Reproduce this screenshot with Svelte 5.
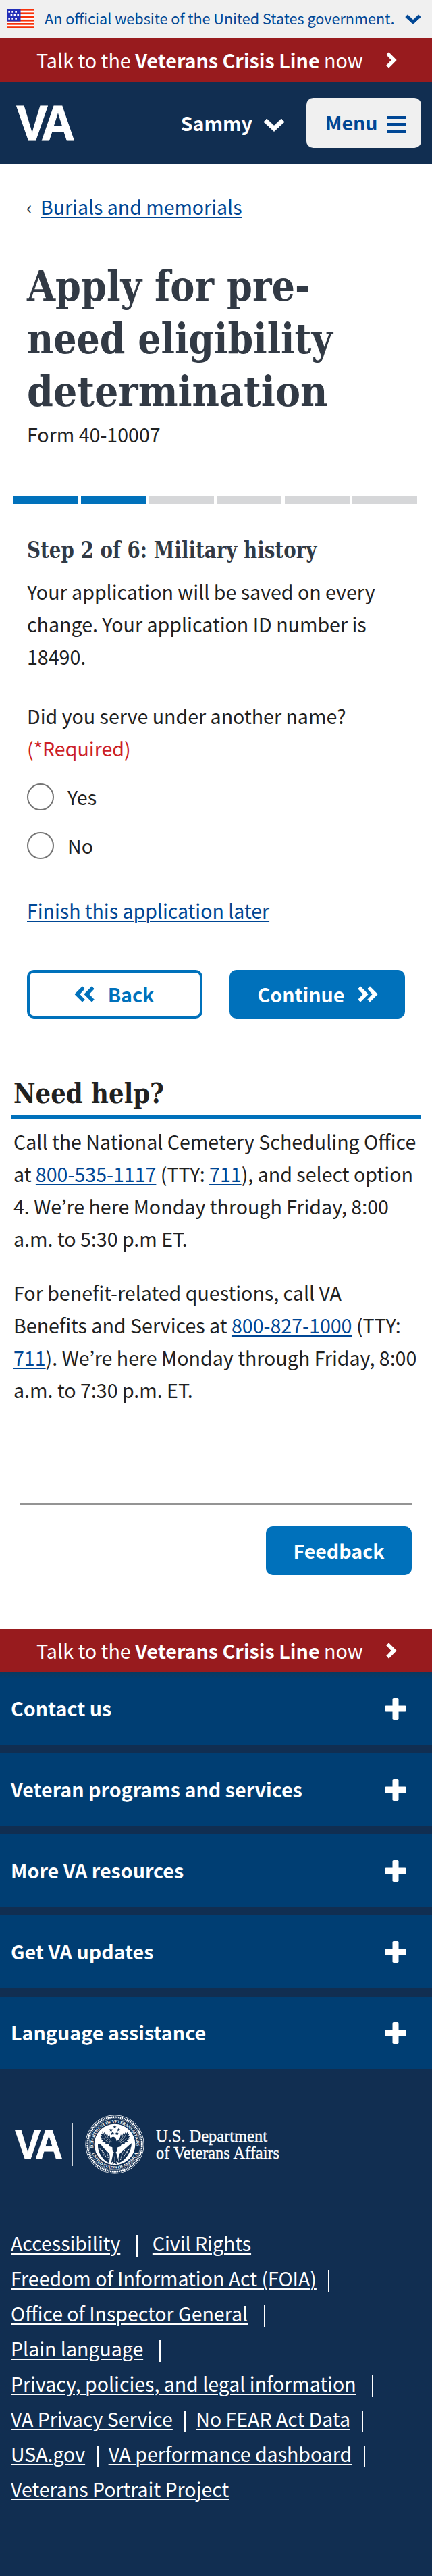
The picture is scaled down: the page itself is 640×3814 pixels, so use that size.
<script>
  let serve = $state('');
  const steps = [true, true, false, false, false, false];
  const title = [['Apply for pre-', 0.875], ['need eligibility', 0.869], ['determination', 0.897]];
  const sections = ['Contact us', 'Veteran programs and services', 'More VA resources', 'Get VA updates', 'Language assistance'];
  const rows = [
    [{ t: 'Accessibility', wide: true, sep: true }, { t: 'Civil Rights' }],
    [{ t: 'Freedom of Information Act (FOIA)', sep: true }],
    [{ t: 'Office of Inspector General', wide: true, sep: true }],
    [{ t: 'Plain language', wide: true, sep: true }],
    [{ t: 'Privacy, policies, and legal information', wide: true, sep: true }],
    [{ t: 'VA Privacy Service', sep: true }, { t: 'No FEAR Act Data', sep: true }],
    [{ t: 'USA.gov', sep: true }, { t: 'VA performance dashboard', sep: true }],
    [{ t: 'Veterans Portrait Project' }]
  ];
  const stars = [[12.3, 16], [17.3, 16], [22.3, 16], [15.6, 21], [20.6, 21], [25.4, 21], [12.3, 26], [17.3, 26], [22.3, 26]];
  const sealStars = [[133, 98], [150, 85], [167, 98], [140, 114], [160, 114]];
  const wing = 'M93 104 97 119 87 114 95 128 84 125 95 138 87 137 100 147 93 149 110 156 108 160 122 161 128 173 152 178 152 152Q138 148 131 137L126 118 121 128 115 112 112 122 104 106 102 116z';
</script>

{#snippet down(w, h)}
  <svg class="ico" width={w} height={h} viewBox="0 0 32 20" preserveAspectRatio="none"><path d="M1 5.6 5.2 1 16 11.4 26.8 1 31 5.6 16 19.4z" /></svg>
{/snippet}
{#snippet right()}
  <svg class="ico" width="16" height="24" viewBox="0 0 16 24"><path d="M4 .8 15.2 12 4 23.2.8 19.8 8.2 12 .8 4.2z" /></svg>
{/snippet}
{#snippet crisis()}
  <div class="crisis">
    <span>Talk to the <b>Veterans Crisis Line</b> now</span>
    {@render right()}
  </div>
{/snippet}
{#snippet va(w, h)}
  <svg class="va" width={w} height={h} viewBox="0 0 85 52.5"><text transform="translate(0 52.2) scale(.93 1)" x="0.4 39.6" y="0">VA</text></svg>
{/snippet}
{#snippet seal()}
  <svg class="seal" width="88" height="88" viewBox="18 31 264 264">
    <g fill="none" stroke="#fff">
      <circle cx="150" cy="163" r="129.5" stroke-width="2.5" />
      <circle cx="150" cy="163" r="121" stroke-width="8" stroke-dasharray="5.5 2.4" />
      <circle cx="150" cy="163" r="114" stroke-width="1.5" />
    </g>
    <path id="arcTop" d="M55 178A96 96 0 1 1 245 178" fill="none" />
    <path id="arcBottom" d="M42 178A109 109 0 0 0 258 178" fill="none" />
    <text class="ring"><textPath href="#arcTop" textLength="322" startOffset="0">DEPARTMENT OF VETERANS AFFAIRS</textPath></text>
    <text class="ring"><textPath href="#arcBottom" textLength="262" startOffset="26">UNITED STATES OF AMERICA</textPath></text>
    <circle cx="150" cy="163" r="91" fill="#fff" />
    <g fill="#112e51">
      {#each sealStars as [x, y]}
        <path transform="translate({x} {y})" d="M0-8 2.2-2.5 8-2.3 3.5 1.3 5 7 0 3.7-5 7-3.5 1.3-8-2.3-2.2-2.5z" />
      {/each}
      <path d={wing} />
      <path d={wing} transform="translate(303 0) scale(-1 1)" />
      <path d="M75 160q14 0 20 13l31 31q5 20-3 40-18-5-33-29-17-24-15-55zM225 158q-12 8-24 20l-30 27q-9 20 0 39 19-7 35-30 18-26 19-56z" />
      <path d="M143 201l-9 44 10-8-5 15 10-6 11 6-3-14 12 7-12-44z" />
    </g>
    <g stroke="#fff" fill="none" stroke-width="3">
      <path d="M104 181q15 10 17 49M92 188q14 14 20 35M83 182q14 10 18 30M195 190q-15 15-19 42M211 184q-12 18-22 37M219 176q-9 11-15 27" stroke-dasharray="7 3" />
      <path d="M103 117q8 22 30 36M114 122q6 16 22 28M98 133q10 14 30 24M200 117q-8 22-30 36M189 122q-6 16-22 28M205 133q-10 14-30 24M150 216v25" stroke-width="1.8" />
      <path d="M74 145l64 55M228 140l-65 58" stroke-width="7" />
    </g>
    <path d="M130 140q4-12 15-11 11 2 13 20l5 29-4 16-9 9-10-12-2-34 1-14z" fill="#112e51" />
  </svg>
{/snippet}

<div class="page">
  <div class="gov">
    <svg width="41" height="29" viewBox="10 13 41 29">
      <rect x="10" y="13" width="41" height="29" fill="#fff" />
      {#each [13, 18.4, 23.6, 28.9, 34, 39.2] as y}<rect x="10" {y} width="41" height="2.7" fill="#f7320b" />{/each}
      <rect x="10" y="13" width="20.5" height="18.5" fill="#232fb8" />
      {#each stars as [x, y]}<rect {x} {y} width="2.7" height="2.7" fill="#fff" />{/each}
    </svg>
    <span>An official website of the United States government.</span>
    {@render down(24, 15)}
  </div>
  {@render crisis()}
  <header>
    {@render va(85, 52.5)}
    <div class="user"><span>Sammy</span>{@render down(32, 20)}</div>
    <button class="menu"><span>Menu</span><i></i></button>
  </header>

  <nav class="crumb"><span>‹</span><a href="#burials">Burials and memorials</a></nav>

  <main>
    <h1>
      {#each title as [text, k]}<span style="transform:scaleX({k})">{text}</span>{/each}
    </h1>
    <p>Form 40-10007</p>
  </main>
  <div class="progress">
    {#each steps as done}<div class:done></div>{/each}
  </div>
  <section class="form">
    <h2><span>Step 2 of 6: Military history</span></h2>
    <p>Your application will be saved on every change. Your application ID number is 18490.</p>
    <p class="q">Did you serve under another name? <em>(*Required)</em></p>
    <div class="radios">
      {#each ['Yes', 'No'] as o}
        <label><input type="radio" name="serve" value={o} bind:group={serve} />{o}</label>
      {/each}
    </div>
    <div class="later"><a href="#later">Finish this application later</a></div>
    <div class="buttons">
      <button class="back"><span class="ch flip">{@render right()}{@render right()}</span><span>Back</span></button>
      <button><span>Continue</span><span class="ch">{@render right()}{@render right()}</span></button>
    </div>
  </section>

  <section class="help">
    <h2><span>Need help?</span></h2>
    <p>Call the National Cemetery Scheduling Office<br />at <a href="#tel1">800-535-1117</a> (TTY: <a href="#tty">711</a>), and select option<br />4. We’re here Monday through Friday, 8:00<br />a.m. to 5:30 p.m ET.</p>
    <p>For benefit-related questions, call VA<br />Benefits and Services at <a href="#tel2">800-827-1000</a> (TTY:<br /><a href="#tty">711</a>). We’re here Monday through Friday, 8:00<br />a.m. to 7:30 p.m. ET.</p>
  </section>

  <div class="feedback"><button>Feedback</button></div>

  <footer>
    {@render crisis()}
    <div class="acc">
      {#each sections as s}
        <div class="item"><span>{s}</span><svg width="32" height="32" viewBox="0 0 32 32"><rect x="0" y="11.6" width="32" height="9" rx="1.8" /><rect x="11.5" y="0" width="9" height="32" rx="1.8" /></svg></div>
      {/each}
    </div>
    <div class="brand">
      {@render va(69, 42.6)}
      <i></i>
      {@render seal()}
      <svg width="200" height="64" viewBox="0 -2 200 64"><g class="dept"><text x="0" y="25.8" textLength="165" lengthAdjust="spacingAndGlyphs">U.S. Department</text><text x="0" y="50.5" textLength="183" lengthAdjust="spacingAndGlyphs">of Veterans Affairs</text></g></svg>
    </div>
    <div class="links">
      {#each rows as row}
        <div class="row">
          {#each row as l}
            <span class={['link', l.sep && 'sep', l.wide && 'wide']}><a href="#link">{l.t}</a></span>
          {/each}
        </div>
      {/each}
    </div>
  </footer>
</div>

<style>
  :global(body) { margin: 0; }
  * { box-sizing: border-box; }
  .page { width: 640px; height: 3814px; background: #fff; color: #212121; font: 28.6px/48px 'Noto Sans CJK KR', 'Open Sans', sans-serif; overflow: hidden; }
  p, h1, h2 { margin: 0; }
  a { color: #004795; text-decoration: underline; text-decoration-thickness: 2px; text-underline-offset: 3px; }
  svg { display: block; flex: none; }
  .ico { fill: currentColor; stroke: currentColor; stroke-width: 1; stroke-linejoin: round; }
  button { font: inherit; font-weight: 700; border: 0; border-radius: 10px; padding: 0; color: #fff; background: #0071bb; display: flex; align-items: center; }
  .gov { height: 57px; background: #f0f0f0; display: flex; align-items: center; padding: 0 16px 0 10px; color: #004795; font-size: 21.6px; }
  .gov svg:first-child { margin-bottom: 2px; }
  .gov span { margin: -4px auto 0 15px; }
  .crisis { height: 64px; background: #981b1e; color: #fff; display: flex; align-items: center; padding: 0 52px 0 54px; justify-content: space-between; white-space: nowrap; font-size: 28.7px; }
  header { height: 122px; background: #112e51; color: #fff; display: flex; align-items: center; padding: 0 16px 0 24px; }
  .va { overflow: visible; fill: #fff; stroke: #fff; stroke-width: 1.2px; font: 700 75px 'Liberation Sans', Arial, sans-serif; }
  .user { display: flex; align-items: center; gap: 16px; margin-left: auto; font-weight: 700; }
  .user svg { margin-top: 6px; }
  .menu { margin-left: 32px; width: 170px; height: 74px; background: #f0f0f0; color: #004795; padding-left: 28px; gap: 13px; }
  .menu span { margin-top: -3px; }
  .menu i { width: 28px; height: 25px; margin-top: 4px; border-top: 4.5px solid; border-bottom: 4.5px solid; background: linear-gradient(currentColor, currentColor) center / 28px 4.5px no-repeat; }
  .crumb { padding: 39px 0 0 39px; display: flex; height: 142px; font-size: 28.5px; }
  .crumb span { color: #323a45; width: 21px; }
  main { padding: 0 40px; }
  h1, h2 { font-family: 'DejaVu Serif', serif; font-weight: 700; color: #323a45; white-space: nowrap; }
  h1 span, h2 span { display: inline-block; transform-origin: 0 50%; }
  h1 { font-size: 62px; line-height: 78px; }
  h1 span { display: table; }
  .progress { margin: 67px 20px 0; display: flex; gap: 4.5px; width: 598px; }
  .progress div { flex: 1; height: 12px; background: #d6d7d9; }
  .progress .done { background: #0071bb; }
  .form { padding: 47px 40px 0; }
  .form h2 { font-size: 33px; line-height: 44px; margin-bottom: 15px; }
  .form h2 span { transform: scaleX(.84); }
  .q { margin-top: 40px; }
  em { font-style: normal; color: #cd2026; display: block; }
  .radios { margin-top: 28px; display: grid; gap: 32px; }
  label { display: flex; align-items: center; gap: 20px; height: 40px; }
  input { appearance: none; margin: 0; width: 40px; height: 40px; border: 2px solid #757575; border-radius: 50%; background: #fff; }
  .later { margin-top: 52px; font-size: 28.5px; }
  .buttons { margin-top: 64px; display: grid; grid-template-columns: 260px 260px; gap: 40px; }
  .buttons button { height: 72px; justify-content: center; gap: 20px; }
  .buttons .back { background: #fff; color: #0071bb; border: 4px solid; }
  .ch { display: flex; width: 28px; }
  .ch :global(svg + svg) { margin-left: -2px; }
  .flip { transform: scaleX(-1); }
  .help { padding: 86px 17px 0 17px; }
  .help h2 { color: #212121; font-size: 41.4px; line-height: 50px; padding: 0 0 7px 3px; border-bottom: 6px solid #0071bb; margin-bottom: 9px; }
  .help h2 span { transform: scaleX(.86); }
  .help p { padding: 0 0 0 3px; margin-bottom: 32px; white-space: nowrap; }
  .feedback { margin: 144px 30px 0; border-top: 2px solid #949494; padding-top: 32px; height: 186px; }
  .feedback button { margin-left: auto; width: 216px; height: 72px; justify-content: center; }
  footer { background: #112e51; color: #fff; height: 1402px; }
  .acc { display: grid; gap: 12px; font-weight: 700; font-size: 28.66px; }
  .item { height: 108px; background: #003e73; display: flex; align-items: center; justify-content: space-between; padding: 0 38px 0 16px; }
  .item:first-child { background: linear-gradient(#0a395f, #003e73 10px); }
  .item svg { fill: #fff; }
  .item span { margin-top: -2px; }
  .brand { display: flex; align-items: center; height: 88px; margin-top: 67px; padding-left: 22px; }
  .brand i { width: 1px; height: 63px; background: #cfd5dc; margin: 0 18px 0 16px; }
  .dept { font: 26px 'Liberation Serif', serif; fill: #fff; stroke: #fff; stroke-width: .35px; }
  .seal { margin-right: 17px; }
  .ring { font: 700 19px 'Liberation Serif', serif; fill: #fff; }
  .links { padding: 76px 16px 0; line-height: 52px; font-size: 28.5px; }
  .row { display: flex; height: 52px; align-items: center; }
  .link { display: flex; align-items: center; white-space: nowrap; }
  .link a { color: #fff; }
  .sep::after { content: ''; width: 2px; height: 32px; background: #fff; margin: 7px 15px 0 17.5px; }
  .wide::after { margin: 7px 22px 0 23.5px; }
</style>
